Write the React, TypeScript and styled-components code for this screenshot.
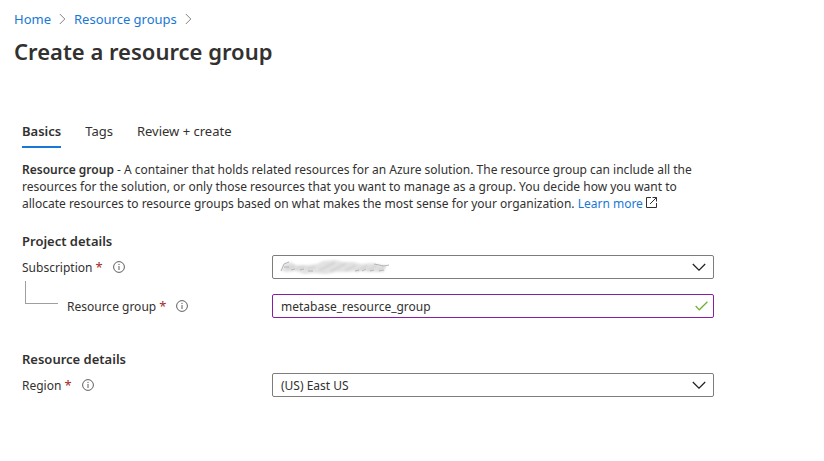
import React, { useState } from "react";
import styled, { createGlobalStyle } from "styled-components";

const GlobalStyle = createGlobalStyle`
  *, *::before, *::after { box-sizing: border-box; }
  body {
    margin: 0;
    background: #fff;
    color: #323130;
    font: 12px/17px "Noto Sans", "Open Sans", sans-serif;
  }
`;

const Page = styled.div`
  padding: 10px 14px 24px;
`;

const Breadcrumbs = styled.nav`
  display: flex;
  align-items: center;
  gap: 8px;
  font-size: 13px;
  line-height: 18px;
`;

const Link = styled.a`
  color: #1878d4;
  text-decoration: none;
`;

const Title = styled.h1`
  margin: 5px 0 0;
  font-size: 22px;
  line-height: 36px;
  font-weight: 600;
`;

const Content = styled.main`
  max-width: 708px;
  padding: 0 8px;
`;

const Tabs = styled.div`
  display: flex;
  gap: 24px;
  margin-top: 51px;
`;

const Tab = styled.button<{ $active?: boolean }>`
  height: 28px;
  padding: 0 0 4px;
  border: 0;
  border-bottom: 2px solid ${(p) => (p.$active ? "#1878d4" : "transparent")};
  background: none;
  color: inherit;
  font: inherit;
  font-size: 13px;
  font-weight: ${(p) => (p.$active ? 600 : 400)};
  cursor: pointer;
`;

const Description = styled.p`
  margin: 13px 0 0;

  svg { margin-left: 3px; }
`;

const Strong = styled.strong`
  font-weight: 600;
`;

const Section = styled.section`
  margin-top: 20px;

  & + & { margin-top: 32px; }
`;

const SectionTitle = styled.h2`
  margin: 0 0 5px;
  font-size: 13px;
  line-height: 18px;
  font-weight: 600;
`;

const Row = styled.div`
  display: grid;
  grid-template-columns: 250px minmax(0, 1fr);
  align-items: center;

  & + & { margin-top: 15px; }
`;

const LabelCell = styled.div<{ $nested?: boolean }>`
  position: relative;
  display: flex;
  align-items: center;
  gap: 10px;
  padding-left: ${(p) => (p.$nested ? 45 : 0)}px;
`;

const Branch = styled.span`
  position: absolute;
  left: 3px;
  bottom: 11px;
  width: 33px;
  height: 23px;
  border: solid #a19f9d;
  border-width: 0 0 1px 1px;
`;

const Required = styled.span`
  color: #a4262c;
  font-size: 13px;
`;

const InfoButton = styled.button`
  display: flex;
  padding: 0;
  border: 0;
  background: none;
  color: #605e5c;
`;

const FieldBox = styled.div`
  position: relative;
`;

const Select = styled.select`
  display: block;
  width: 100%;
  height: 24px;
  padding: 0 32px 0 8px;
  border: 1px solid #7f7d7b;
  border-radius: 2px;
  background: #fff;
  color: inherit;
  font: inherit;
  appearance: none;
`;

const Input = styled.input`
  display: block;
  width: 100%;
  height: 24px;
  padding: 0 28px 0 8px;
  border: 1px solid #881fa3;
  border-radius: 2px;
  outline: 0;
  background: #fff;
  color: inherit;
  font: inherit;
`;

const Adornment = styled.span<{ $right: number }>`
  position: absolute;
  inset: 0 ${(p) => p.$right}px 0 auto;
  display: flex;
  align-items: center;
  pointer-events: none;
`;

const Redaction = styled.span`
  position: absolute;
  inset: 0 auto 0 6px;
  display: flex;
  align-items: center;
  pointer-events: none;
`;

const CrumbArrow = () => (
  <svg width="7" height="12" viewBox="0 0 7 12" fill="none" stroke="#858381" aria-hidden="true">
    <path d="M.8 1 5.8 6l-5 5" />
  </svg>
);

const ExternalIcon = () => (
  <svg width="11" height="11" viewBox="0 0 11 11" fill="none" stroke="#323130" aria-hidden="true">
    <path d="M5 .5H.5v10h10V6M6.5.5h4v4M10.5.5 4 7" />
  </svg>
);

const InfoIcon = () => (
  <svg width="12" height="12" viewBox="0 0 12 12" aria-hidden="true">
    <circle cx="6" cy="6" r="5.4" fill="none" stroke="currentColor" strokeWidth="1" />
    <path d="M6 5v4" stroke="currentColor" strokeWidth="1" />
    <circle cx="6" cy="3.4" r=".6" fill="currentColor" />
  </svg>
);

const Chevron = () => (
  <svg width="14" height="8" viewBox="0 0 14 8" fill="none" stroke="#201f1e" strokeWidth="1.2" aria-hidden="true">
    <path d="m.8 1 6.2 6.2L13.2 1" />
  </svg>
);

const Check = () => (
  <svg width="13" height="10" viewBox="0 0 13 10" fill="none" stroke="#6bb033" strokeWidth="1.2" aria-hidden="true">
    <path d="m.7 5 3.6 3.8L12.4.8" />
  </svg>
);

const Smudge = () => (
  <svg width="114" height="16" viewBox="0 0 114 16" aria-hidden="true">
    <defs>
      <filter id="soften" x="-5%" y="-30%" width="110%" height="160%">
        <feGaussianBlur stdDeviation="0.8" />
      </filter>
      <filter id="trace" x="-5%" y="-30%" width="110%" height="160%">
        <feGaussianBlur stdDeviation="0.4" />
      </filter>
    </defs>
    <g filter="url(#soften)">
      <path
        d="M3 12 6 5l6-2 6 3 13 0 8-1 6-3 12-1 8 2 10 0 8 2 11-1 14 3-2 6-12 0-12-1-13 1-11 0-10 2-12-1-10 1-8-3-9 1-5-1Z"
        fill="#e2e2e2"
      />
      <g fill="none" stroke="#d2d2d2" strokeLinecap="round" strokeWidth="2">
        <path d="M9 10 16 7M18 10l8-2M29 10l7-2M42 11l14-7M53 12l14-7" />
        <path d="m68 11 9-4M79 12l10-5M90 11l8-4M100 11l7-4" />
      </g>
    </g>
    <g filter="url(#trace)" fill="none" stroke="#b4b4b4">
      <path d="m3 12 3-7 5-2M6 8h5M13 11l4-1M22 11l4-1M30 12h5" />
      <path d="m77 12 4-1M84 12l4-2M92 12l4-1M101 12l5-1M96 5l10 2 5-1" />
    </g>
  </svg>
);

interface LabelProps {
  htmlFor: string;
  text: string;
  nested?: boolean;
}

const FieldLabel = ({ htmlFor, text, nested }: LabelProps) => (
  <LabelCell $nested={nested}>
    {nested && <Branch />}
    <label htmlFor={htmlFor}>
      {text} <Required>*</Required>
    </label>
    <InfoButton type="button" aria-label={`About ${text}`}>
      <InfoIcon />
    </InfoButton>
  </LabelCell>
);

const tabs = ["Basics", "Tags", "Review + create"];

export default function App() {
  const [active, setActive] = useState("Basics");
  const [name, setName] = useState("metabase_resource_group");

  return (
    <>
      <GlobalStyle />
      <Page>
        <Breadcrumbs aria-label="Breadcrumb">
          <Link href="#home">Home</Link>
          <CrumbArrow />
          <Link href="#groups">Resource groups</Link>
          <CrumbArrow />
        </Breadcrumbs>
        <Title>Create a resource group</Title>
        <Content>
          <Tabs role="tablist">
            {tabs.map((tab) => (
              <Tab
                key={tab}
                type="button"
                role="tab"
                aria-selected={active === tab}
                $active={active === tab}
                onClick={() => setActive(tab)}
              >
                {tab}
              </Tab>
            ))}
          </Tabs>
          <Description>
            <Strong>Resource group</Strong> - A container that holds related resources for an Azure
            solution. The resource group can include all the resources for the solution, or only
            those resources that you want to manage as a group. You decide how you want to allocate
            resources to resource groups based on what makes the most sense for your organization.{" "}
            <Link href="#learn">
              Learn more
              <ExternalIcon />
            </Link>
          </Description>
          <Section>
            <SectionTitle>Project details</SectionTitle>
            <Row>
              <FieldLabel htmlFor="subscription" text="Subscription" />
              <FieldBox>
                <Select id="subscription">
                  <option aria-label="Hidden subscription" />
                </Select>
                <Redaction>
                  <Smudge />
                </Redaction>
                <Adornment $right={8}>
                  <Chevron />
                </Adornment>
              </FieldBox>
            </Row>
            <Row>
              <FieldLabel htmlFor="group" text="Resource group" nested />
              <FieldBox>
                <Input id="group" value={name} onChange={(e) => setName(e.target.value)} />
                <Adornment $right={6}>
                  <Check />
                </Adornment>
              </FieldBox>
            </Row>
          </Section>
          <Section>
            <SectionTitle>Resource details</SectionTitle>
            <Row>
              <FieldLabel htmlFor="region" text="Region" />
              <FieldBox>
                <Select id="region">
                  <option>(US) East US</option>
                </Select>
                <Adornment $right={8}>
                  <Chevron />
                </Adornment>
              </FieldBox>
            </Row>
          </Section>
        </Content>
      </Page>
    </>
  );
}
